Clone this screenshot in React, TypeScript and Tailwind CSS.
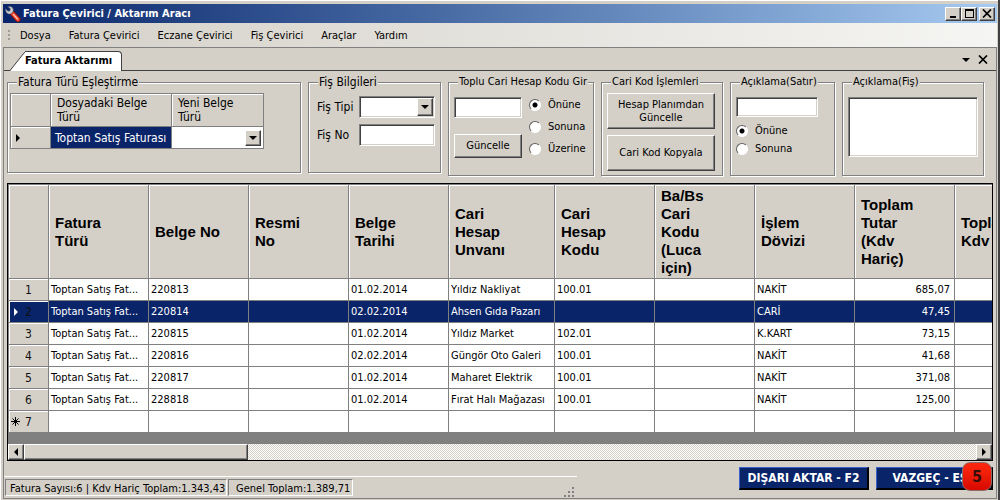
import { useState } from "react";
import type { ReactNode } from "react";
import clsx from "clsx";

const raised =
  "border border-white border-r-[#404040] border-b-[#404040] bg-[#d4d0c8] shadow-[inset_-1px_-1px_0_#808080]";

const sunken =
  "border border-[#808080] border-r-white border-b-white bg-white shadow-[inset_1px_1px_0_#404040,inset_-1px_-1px_0_#d4d0c8]";

const MENU = ["Dosya", "Fatura Çevirici", "Eczane Çevirici", "Fiş Çevirici", "Araçlar", "Yardım"];

const COLUMNS = [
  { title: "Fatura Türü", width: 100, wrap: "w-[60px]" },
  { title: "Belge No", width: 100, wrap: "w-[80px]" },
  { title: "Resmi No", width: 100, wrap: "w-[60px]" },
  { title: "Belge Tarihi", width: 100, wrap: "w-[60px]" },
  { title: "Cari Hesap Unvanı", width: 106, wrap: "w-[60px]" },
  { title: "Cari Hesap Kodu", width: 100, wrap: "w-[60px]" },
  { title: "Ba/Bs Cari Kodu (Luca için)", width: 100, wrap: "w-[60px]" },
  { title: "İşlem Dövizi", width: 100, wrap: "w-[60px]" },
  { title: "Toplam Tutar (Kdv Hariç)", width: 100, wrap: "w-[60px]" },
  { title: "Toplam Kdv", width: 100, wrap: "w-[60px]" },
];

const ROWS = [
  ["Toptan Satış Fat...", "220813", "", "01.02.2014", "Yıldız Nakliyat", "100.01", "", "NAKİT", "685,07", ""],
  ["Toptan Satış Fat...", "220814", "", "02.02.2014", "Ahsen Gıda Pazarı", "", "", "CARİ", "47,45", ""],
  ["Toptan Satış Fat...", "220815", "", "01.02.2014", "Yıldız Market", "102.01", "", "K.KART", "73,15", ""],
  ["Toptan Satış Fat...", "220816", "", "02.02.2014", "Güngör Oto Galeri", "100.01", "", "NAKİT", "41,68", ""],
  ["Toptan Satış Fat...", "220817", "", "01.02.2014", "Maharet Elektrik", "100.01", "", "NAKİT", "371,08", ""],
  ["Toptan Satış Fat...", "228818", "", "01.02.2014", "Fırat Halı Mağazası", "100.01", "", "NAKİT", "125,00", ""],
  ["", "", "", "", "", "", "", "", "", ""],
];

function WrenchIcon() {
  return (
    <svg width="16" height="16" viewBox="0 0 16 16" aria-hidden>
      <path d="M8 8l5 5.500" stroke="#9c1408" strokeWidth="5" strokeLinecap="round" />
      <path d="M7.500 7.500l5.500 6" stroke="#f04830" strokeWidth="3.400" strokeLinecap="round" />
      <path d="M8.500 8.500l4 4.500" stroke="#ffc4b4" strokeWidth="1.200" strokeLinecap="round" />
      <path
        d="M.7 3L3 5.200l2-.4.300-2L3.200.7C5.500 0 8 1.200 8.200 3.500c.1 1 0 1.500-.3 2.200L5.700 7.900C3 8.600.200 6.500.700 3z"
        fill="#d0d4d8"
        stroke="#585c64"
        strokeWidth="0.7"
      />
    </svg>
  );
}

function Arrow({ dir, className }: { dir: "down" | "left" | "right"; className?: string }) {
  const d = { down: "M0 2h8L4 6z", left: "M6 0v8L2 4z", right: "M2 0v8l4-4z" }[dir];
  return (
    <svg width="8" height="8" viewBox="0 0 8 8" fill="currentColor" aria-hidden className={clsx("shrink-0", className)}>
      <path d={d} />
    </svg>
  );
}

function CloseIcon() {
  return (
    <svg width="10" height="9" viewBox="0 0 10 9" fill="none" stroke="#000" strokeWidth="1.7" aria-hidden>
      <path d="M1 .5l8 8M9 .5l-8 8" />
    </svg>
  );
}

function Group({ title, className, children }: { title: string; className?: string; children: ReactNode }) {
  return (
    <fieldset
      className={clsx(
        "border border-[#808080] px-[5px] shadow-[1px_1px_0_#fff,inset_1px_1px_0_#fff]",
        className
      )}
    >
      <legend className="ml-1 h-4 bg-[#d4d0c8] px-px leading-4 whitespace-nowrap">{title}</legend>
      {children}
    </fieldset>
  );
}

function Combo({ id, label, flat }: { id?: string; label?: string; flat?: boolean }) {
  return (
    <div className="relative">
      <select
        id={id}
        aria-label={label}
        className={clsx("block w-full appearance-none bg-white px-1 outline-none", flat ? "h-5" : "h-[22px]", !flat && sunken)}
      >
        <option value=""></option>
      </select>
      <span
        className={clsx(
          "pointer-events-none absolute inset-y-0.5 right-0.5 flex w-4 items-center justify-center",
          raised
        )}
      >
        <Arrow dir="down" />
      </span>
    </div>
  );
}

function Radio({ name, label, checked }: { name: string; label: string; checked?: boolean }) {
  return (
    <label className="flex h-4 items-center gap-[7px]">
      <input
        type="radio"
        name={name}
        defaultChecked={checked}
        className="h-3 w-3 appearance-none rounded-full border border-[#606060] border-r-white border-b-white bg-white checked:bg-[radial-gradient(circle,#000_2px,#fff_3px)]"
      />
      {label}
    </label>
  );
}

function TitleBar() {
  return (
    <header className="flex h-[19px] items-center bg-gradient-to-r from-[#0a246a] to-[#a6caf0] px-0.5">
      <WrenchIcon />
      <h1 className="flex-1 pt-px pl-0.5 font-bold text-white">Fatura Çevirici / Aktarım Aracı</h1>
      <button type="button" aria-label="Simge durumuna küçült" className={clsx("flex h-[14px] w-4 items-end pb-0.5 pl-1", raised)}>
        <span className="h-0.5 w-1.5 bg-black" />
      </button>
      <button type="button" aria-label="Ekranı kapla" className={clsx("flex h-[14px] w-4 items-center justify-center", raised)}>
        <span className="h-[9px] w-[9px] border border-t-2 border-black" />
      </button>
      <button type="button" aria-label="Kapat" className={clsx("ml-0.5 flex h-[14px] w-4 items-center justify-center", raised)}>
        <CloseIcon />
      </button>
    </header>
  );
}

function MenuBar() {
  return (
    <nav className="flex h-6 items-center bg-gradient-to-r from-[#d4d0c8] to-[#f5f5f3] pl-[5px]">
      <span className="mr-2.5 flex flex-col gap-0.5" aria-hidden>
        <span className="h-0.5 w-0.5 bg-[#a09c94]" />
        <span className="h-0.5 w-0.5 bg-[#a09c94]" />
        <span className="h-0.5 w-0.5 bg-[#a09c94]" />
      </span>
      <div className="flex gap-[18px] pt-0.5">
        {MENU.map((item) => (
          <button key={item} type="button">
            {item}
          </button>
        ))}
      </div>
    </nav>
  );
}

function TabStrip() {
  return (
    <div className="flex h-[23px] items-end border-b border-[#404040] pr-2 pl-1.5">
      <div className="-mb-px flex items-end">
        <svg width="17" height="20" viewBox="0 0 17 20" aria-hidden>
          <path d="M0 20L14 2q2-1.500 3-1.500V20z" fill="#fff" />
          <path d="M0 19.500L14 2q2-1.500 3-1.500" fill="none" stroke="#404040" />
        </svg>
        <button
          type="button"
          className="-ml-0.5 h-5 rounded-tr-sm border-t border-r border-[#404040] bg-white pr-[9px] font-bold"
        >
          Fatura Aktarımı
        </button>
      </div>
      <div className="ml-auto flex items-center gap-2 pb-1.5">
        <button type="button" aria-label="Sekmeler">
          <Arrow dir="down" />
        </button>
        <button type="button" aria-label="Sekmeyi kapat">
          <CloseIcon />
        </button>
      </div>
    </div>
  );
}

function TypeMapping() {
  return (
    <table className="mt-[3px] -ml-[3px] w-[254px] table-fixed border-collapse text-[12px] leading-[14px]">
      <thead>
        <tr className="h-8 text-left align-top">
          <th className="w-10 border border-[#808080] shadow-[inset_1px_1px_0_#fff]"></th>
          <th className="border border-[#808080] px-1.5 pt-0.5 font-normal shadow-[inset_1px_1px_0_#fff]">
            Dosyadaki Belge Türü
          </th>
          <th className="w-[92px] border border-[#808080] py-0.5 pr-5 pl-1.5 font-normal shadow-[inset_1px_1px_0_#fff]">
            Yeni Belge Türü
          </th>
        </tr>
      </thead>
      <tbody>
        <tr className="h-[22px]">
          <th className="border border-[#808080] pl-[3px] shadow-[inset_1px_1px_0_#fff]">
            <Arrow dir="right" />
          </th>
          <td className="border border-[#808080] bg-[#0a246a] pl-1 whitespace-nowrap text-white">Toptan Satış Faturası</td>
          <td className="border border-[#808080] bg-white">
            <Combo label="Yeni Belge Türü" flat />
          </td>
        </tr>
      </tbody>
    </table>
  );
}

function Toolbar() {
  return (
    <div className="flex items-start gap-[7px] pt-[3px] pr-3 pl-[3px]">
      <Group title="Fatura Türü Eşleştirme" className="min-h-[99px] w-[294px] text-[12px]">
        <TypeMapping />
      </Group>

      <Group title="Fiş Bilgileri" className="min-h-[99px] w-[133px] text-[12px]">
        <div className="grid grid-cols-[42px_1fr] items-center gap-y-1.5 pt-1.5 pl-[3px]">
          <label htmlFor="fis-tipi">Fiş Tipi</label>
          <Combo id="fis-tipi" />
          <label htmlFor="fis-no">Fiş No</label>
          <input id="fis-no" className={clsx("h-[22px] w-full px-1", sunken)} />
        </div>
      </Group>

      <Group title="Toplu Cari Hesap Kodu Gir" className="min-h-[102px] w-[146px] min-w-0">
        <div className="flex gap-[7px] pt-[7px]">
          <div className="flex w-[68px] flex-col gap-4">
            <input aria-label="Cari hesap kodu" className={clsx("h-[21px] w-full px-1", sunken)} />
            <button type="button" className={clsx("h-6", raised)}>
              Güncelle
            </button>
          </div>
          <div className="flex flex-col gap-1.5">
            <Radio name="hesap-konum" label="Önüne" checked />
            <Radio name="hesap-konum" label="Sonuna" />
            <Radio name="hesap-konum" label="Üzerine" />
          </div>
        </div>
      </Group>

      <Group title="Cari Kod İşlemleri" className="min-h-[102px] w-[122px] min-w-0">
        <div className="flex w-[108px] flex-col gap-1.5 pt-[3px]">
          <button type="button" className={clsx("h-9 px-2 leading-[13px]", raised)}>
            Hesap Planımdan Güncelle
          </button>
          <button type="button" className={clsx("h-9", raised)}>
            Cari Kod Kopyala
          </button>
        </div>
      </Group>

      <Group title="Açıklama(Satır)" className="min-h-[102px] w-[105px]">
        <div className="flex flex-col gap-0.5 pt-[7px]">
          <input aria-label="Açıklama(Satır)" className={clsx("mb-1 h-5 w-[82px] px-1", sunken)} />
          <Radio name="satir-konum" label="Önüne" checked />
          <Radio name="satir-konum" label="Sonuna" />
        </div>
      </Group>

      <Group title="Açıklama(Fiş)" className="min-h-[102px] min-w-0 flex-1">
        <textarea aria-label="Açıklama(Fiş)" className={clsx("mt-[7px] block h-[60px] w-full resize-none p-1", sunken)} />
      </Group>
    </div>
  );
}

function InvoiceGrid() {
  const [selected, setSelected] = useState(1);

  return (
    <section className="mx-[3px] mt-[7px] flex flex-1 flex-col border border-black bg-[#808080]">
      <div className="overflow-hidden border-t border-l border-[#808080]">
        <table className="w-[1046px] table-fixed border-separate border-spacing-0">
          <colgroup>
            <col style={{ width: 40 }} />
            {COLUMNS.map((col) => (
              <col key={col.title} style={{ width: col.width }} />
            ))}
          </colgroup>
          <thead>
            <tr className="h-[94px] bg-[#d4d0c8]">
              <th className="border-r border-b border-[#808080] shadow-[inset_1px_1px_0_#fff]"></th>
              {COLUMNS.map((col) => (
                <th
                  key={col.title}
                  className="border-r border-b border-[#808080] pl-1.5 text-left font-['Liberation_Sans',Arial,sans-serif] text-[15px] leading-[18px] shadow-[inset_1px_1px_0_#fff]"
                >
                  <div className={col.wrap}>{col.title}</div>
                </th>
              ))}
            </tr>
          </thead>
          <tbody>
            {ROWS.map((row, i) => (
              <tr
                key={i}
                onClick={() => setSelected(i)}
                className={clsx("h-[22px]", i === selected ? "bg-[#0a246a] text-white" : "bg-white")}
              >
                <th
                  className={clsx(
                    "border-r border-b border-[#808080] p-0 text-[12px] font-normal shadow-[inset_1px_1px_0_#fff]",
                    i !== selected && "bg-[#d4d0c8]"
                  )}
                >
                  <div className="grid grid-cols-[15px_9px] items-center">
                    <span className="flex justify-end pr-1">
                      {i === selected && <Arrow dir="right" />}
                      {i === ROWS.length - 1 && (
                        <svg width="9" height="9" viewBox="0 0 9 9" stroke="#000" aria-hidden>
                          <path d="M4.500 0v9M0 4.500h9M1.500 1.500l6 6M7.500 1.500l-6 6" />
                        </svg>
                      )}
                    </span>
                    <span className="text-[#101010]">{i + 1}</span>
                  </div>
                </th>
                {row.map((cell, j) => (
                  <td
                    key={j}
                    className={clsx(
                      "overflow-hidden border-r border-b border-[#808080] p-0 pt-0.5 whitespace-nowrap",
                      j === 8 ? "pr-1 text-right" : "pl-0.5"
                    )}
                  >
                    {cell}
                  </td>
                ))}
              </tr>
            ))}
          </tbody>
        </table>
      </div>

      <div className="mt-auto flex h-4 bg-[conic-gradient(#fff_25%,#d4d0c8_0_50%,#fff_0_75%,#d4d0c8_0)] bg-[length:2px_2px]">
        <button type="button" aria-label="Sola kaydır" className={clsx("flex w-4 items-center justify-center", raised)}>
          <Arrow dir="left" />
        </button>
        <div className={clsx("w-[224px]", raised)} />
        <button type="button" aria-label="Sağa kaydır" className={clsx("ml-auto flex w-4 items-center justify-center", raised)}>
          <Arrow dir="right" />
        </button>
      </div>
    </section>
  );
}

function Footer() {
  const statusCell =
    "h-[17px] border border-[#808080] border-r-white border-b-white leading-[17px] whitespace-nowrap";
  const action =
    "h-[23px] border border-[#3a62c8] border-r-2 border-b-2 border-r-black border-b-black bg-[#0a246a] text-[12px] leading-5 font-bold whitespace-nowrap text-white";

  return (
    <footer className="flex h-[37px] items-start justify-between pr-[3px]">
      <div className="mt-[15px] flex w-[573px] items-start border-t border-white pt-0.5">
        <span className={clsx("ml-px w-[222px] pl-1", statusCell)}>Fatura Sayısı:6 | Kdv Hariç Toplam:1.343,43</span>
        <span className={clsx("ml-px w-[125px] pl-[7px]", statusCell)}>Genel Toplam:1.389,71</span>
        <svg width="11" height="11" viewBox="0 0 11 11" fill="#808080" className="mt-2 mr-0.5 ml-auto" aria-hidden>
          <path d="M8 0h2v2H8zM4 4h2v2H4zM8 4h2v2H8zM0 8h2v2H0zM4 8h2v2H4zM8 8h2v2H8z" />
        </svg>
      </div>
      <div className="relative mt-1.5 flex gap-[7px]">
        <button type="button" className={clsx("w-[130px]", action)}>
          DIŞARI AKTAR - F2
        </button>
        <button type="button" className={clsx("w-[117px]", action)}>
          VAZGEÇ - ESC
        </button>
        <span className="absolute -top-[5px] right-px flex h-[29px] w-[30px] items-center justify-center rounded-lg border border-[#8c6c68] bg-gradient-to-b from-[#ff2810] to-[#d80800] text-[16px] font-bold text-[#380c08]">
          5
        </span>
      </div>
    </footer>
  );
}

export default function App() {
  return (
    <div className="flex min-h-screen flex-col border-r-2 border-[#404040] bg-[#d4d0c8] font-['DejaVu_Sans_Condensed','DejaVu_Sans',sans-serif] text-[11px] text-black">
      <div className="flex flex-1 flex-col border-t border-l border-white pt-[3px] pr-px pb-px pl-0.5">
        <TitleBar />
        <MenuBar />
        <main className="flex flex-1 flex-col border border-[#808080]">
          <TabStrip />
          <Toolbar />
          <InvoiceGrid />
          <Footer />
        </main>
      </div>
    </div>
  );
}
